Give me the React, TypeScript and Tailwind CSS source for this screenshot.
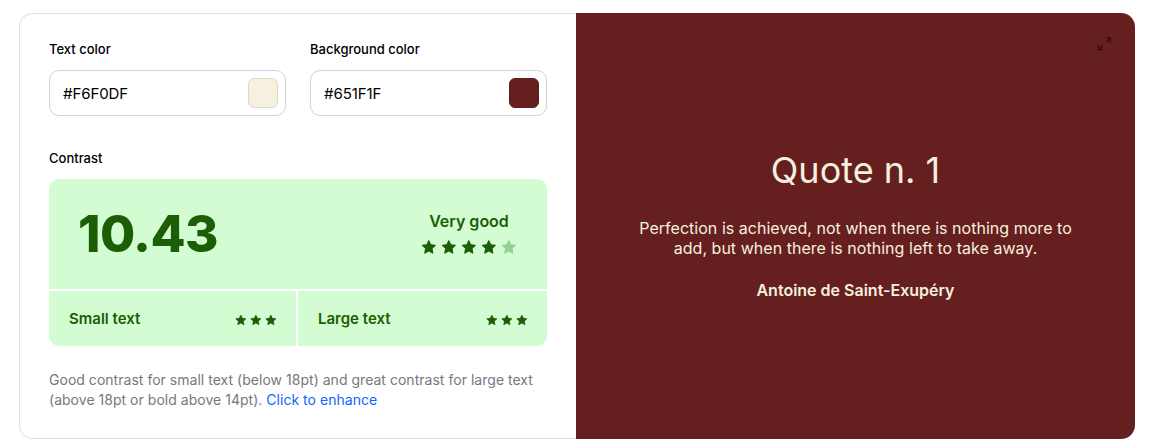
import React from "react";

function Star({ className }: { className: string }) {
  return (
    <svg viewBox="0 0 16 16" fill="currentColor" className={className}>
      <path
        d="M7.8 1.5l2.05 4.25 4.65.6-3.45 3.25.85 4.65L7.8 12l-4.1 2.25.85-4.65L1.1 6.35l4.65-.6z"
        stroke="currentColor"
        strokeWidth="1"
        strokeLinejoin="round"
      />
    </svg>
  );
}

function ColorField({ label, value, swatch }: { label: string; value: string; swatch: string }) {
  return (
    <label className="flex w-[237px] flex-col">
      <span className="h-5 text-[13px] leading-5 font-medium text-black">{label}</span>
      <span className="mt-[11px] flex h-[46px] items-center justify-between rounded-[10px] border border-[#d4d4d8] pr-[7px] pl-[13px]">
        <span className="pt-[2px] text-[15px] leading-5 tracking-[-0.08px] text-black">{value}</span>
        <span className={`size-[30px] rounded-[6px] border ${swatch}`} />
      </span>
    </label>
  );
}

function SizeRating({ label, className }: { label: string; className: string }) {
  return (
    <div className={`flex h-[55px] items-center justify-between bg-[#d3fcd2] pr-[19px] pl-5 ${className}`}>
      <span className="text-[15px] leading-5 font-semibold">{label}</span>
      <span className="mt-[2px] flex gap-[3px]">
        <Star className="size-3" />
        <Star className="size-3" />
        <Star className="size-3" />
      </span>
    </div>
  );
}

export default function App() {
  return (
    <main className="h-[448px] w-[1152px] bg-white pt-[13px] pl-[19px] font-['Inter',sans-serif]">
      <div className="flex h-[426px] w-[1116px]">
        <section className="flex w-[557px] flex-col rounded-l-[14px] border border-r-0 border-[#e0e0e2] pt-[25px] pl-[29px]">
          <div className="flex gap-6">
            <ColorField label="Text color" value="#F6F0DF" swatch="border-[#dedacb] bg-[#f6f0df]" />
            <ColorField label="Background color" value="#651F1F" swatch="border-[#5b1c1c] bg-[#651f1f]" />
          </div>
          <h2 className="mt-8 h-5 text-[13px] leading-5 font-medium text-black">Contrast</h2>
          <div className="mt-[11px] flex w-[498px] flex-col gap-[2px] overflow-hidden rounded-[10px] text-[#1b5e05]">
            <div className="flex h-[110px] items-center justify-between bg-[#d3fcd2] pr-[30px] pl-[29px]">
              <span className="text-[51px] leading-[60px] font-extrabold tracking-[-0.6px]">10.43</span>
              <div className="flex flex-col items-center pb-[5px]">
                <span className="text-[16px] leading-6 font-semibold">Very good</span>
                <span className="mt-[6px] flex gap-1">
                  <Star className="size-4" />
                  <Star className="size-4" />
                  <Star className="size-4" />
                  <Star className="size-4" />
                  <Star className="size-4 text-[#96cf96]" />
                </span>
              </div>
            </div>
            <div className="flex gap-[2px]">
              <SizeRating label="Small text" className="w-[247px]" />
              <SizeRating label="Large text" className="w-[249px]" />
            </div>
          </div>
          <p className="mt-6 w-[498px] text-[14px] leading-5 tracking-[0.025px] text-[#77777d]">
            Good contrast for small text (below 18pt) and great contrast for large text
            <br />
            (above 18pt or bold above 14pt).{" "}
            <a className="text-[#1463ff]">Click to enhance</a>
          </p>
        </section>
        <section className="relative flex w-[559px] flex-col items-center rounded-r-[14px] bg-[#651f1f] pt-[134px] text-center text-[#f6f0df]">
          <svg
            viewBox="0 0 16 16"
            fill="none"
            stroke="currentColor"
            strokeWidth="1.5"
            className="absolute top-[23px] right-[22px] size-4 text-[#35100f]"
          >
            <path d="M8.8 1.8h4.6v4.6M13.1 2.1L9 6.2M6 13.5H1.3V8.8M1.6 13.2l4-4" />
          </svg>
          <h1 className="text-[36px] leading-[46px] font-normal">Quote n. 1</h1>
          <p className="mt-[25px] text-[16px] leading-5 tracking-[0.03px]">
            Perfection is achieved, not when there is nothing more to
            <br />
            add, but when there is nothing left to take away.
          </p>
          <p className="mt-[22px] text-[16px] leading-5 font-semibold">Antoine de Saint-Exupéry</p>
        </section>
      </div>
    </main>
  );
}
